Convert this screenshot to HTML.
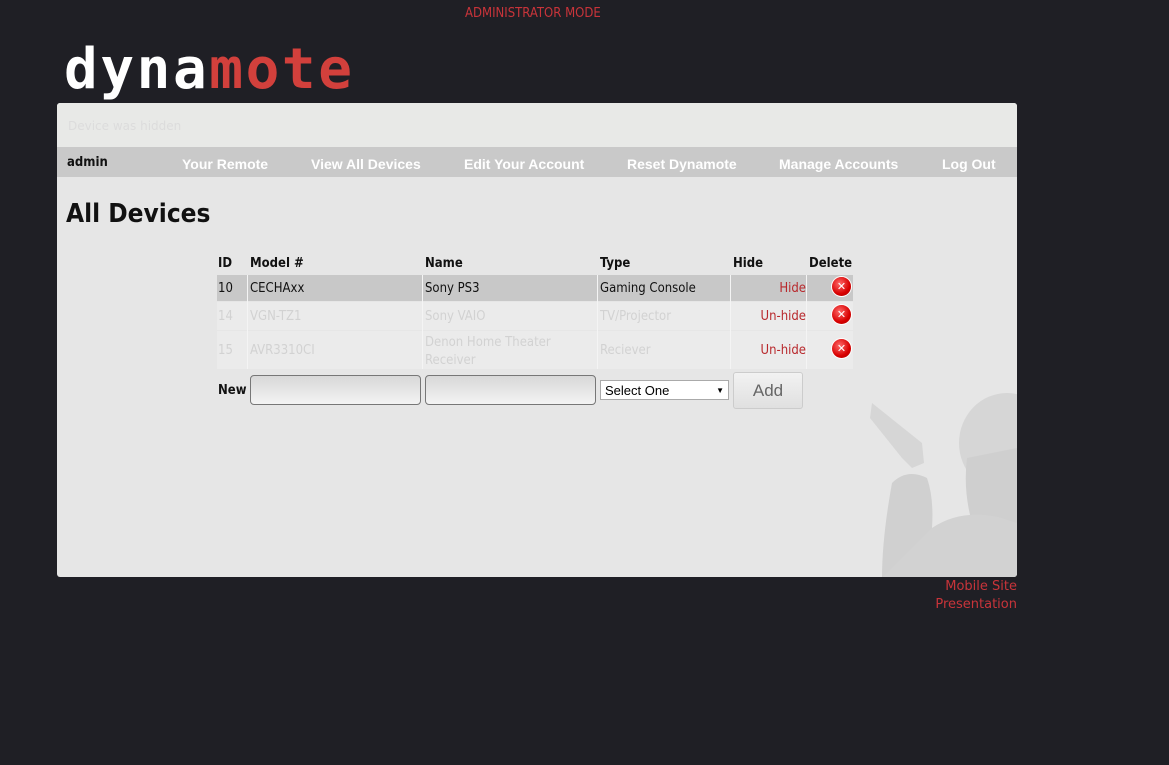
<!DOCTYPE html>
<html><head><style>
body{margin:0;width:1169px;height:765px;background:#1f1f25;font-family:"DejaVu Sans","Liberation Sans",sans-serif;position:relative;overflow:hidden}
.a{position:absolute}
.nav{font-family:"Liberation Sans",Arial,sans-serif;font-weight:bold;color:#fff;font-size:14px;top:156px}
.c{position:absolute;font-size:13px;box-sizing:border-box;padding-left:2px;white-space:nowrap;font-family:"DejaVu Sans Condensed","DejaVu Sans",sans-serif}
.h{font-weight:bold;color:#111;top:256px}
.x{position:absolute;width:19px;height:19px;border-radius:50%;background:radial-gradient(circle at 40% 35%,#ff6a6a,#d80000 60%,#a00);box-shadow:0 0 0 1px #fff;}
.x:after{content:"✕";position:absolute;left:0;top:0;width:19px;line-height:19px;text-align:center;color:#fff;font-size:11px;font-weight:bold}
.f{color:#d2d2d2}
.inp{position:absolute;top:375px;height:30px;width:171px;border:1px solid #777;border-radius:4px;background:linear-gradient(#d8d8d8,#f3f3f3);box-sizing:border-box}
</style></head><body>
<div class="a" style="left:465px;top:6px;color:#c8343a;font-size:13px;font-family:'DejaVu Sans Condensed','DejaVu Sans',sans-serif">ADMINISTRATOR MODE</div>
<div class="a" style="left:64px;top:35px;font-family:'DejaVu Sans Mono',monospace;font-weight:bold;font-size:56px;letter-spacing:2.6px;line-height:70px;color:#fff">dyna<span style="color:#d2403c">mote</span></div>
<div class="a" style="left:57px;top:103px;width:960px;height:474px;background:#e6e6e6;border-radius:3px;overflow:hidden">
 <div class="a" style="left:0;top:0;width:960px;height:44px;background:#e8e9e7"></div>
 <div class="a" style="left:11px;top:16px;font-size:12px;color:#dcdcdc">Device was hidden</div>
 <div class="a" style="left:0;top:44px;width:960px;height:30px;background:#c9c9c9"></div>
 <svg class="a" style="left:805px;top:285px" width="155" height="190" viewBox="0 0 155 190">
  <g fill="#d6d6d6">
   <ellipse cx="145" cy="55" rx="48" ry="50"/>
   <path d="M105 70 Q100 110 115 150 L155 170 L155 60Z" fill="#cfcfcf"/>
   <path d="M10 15 L60 55 L62 75 L50 80 L40 70 L8 30Z"/>
   <path d="M30 95 Q45 80 65 90 Q72 110 70 140 Q60 175 20 190 Q20 150 30 95Z" fill="#d0d0d0"/>
   <path d="M70 140 Q100 120 140 130 L155 135 L155 190 L20 190Z" fill="#d2d2d2"/>
  </g>
 </svg>
</div>
<div class="a" style="left:67px;top:155px;font-size:13px;font-weight:bold;color:#111;font-family:'DejaVu Sans Condensed','DejaVu Sans',sans-serif">admin</div>
<div class="a nav" style="left:182px">Your Remote</div>
<div class="a nav" style="left:311px">View All Devices</div>
<div class="a nav" style="left:464px">Edit Your Account</div>
<div class="a nav" style="left:627px">Reset Dynamote</div>
<div class="a nav" style="left:779px">Manage Accounts</div>
<div class="a nav" style="left:942px">Log Out</div>
<div class="a" style="left:66px;top:199px;font-size:26px;font-weight:bold;color:#111;font-family:'DejaVu Sans Condensed','DejaVu Sans',sans-serif">All Devices</div>

<div class="c h" style="left:216px">ID</div>
<div class="c h" style="left:248px">Model #</div>
<div class="c h" style="left:423px">Name</div>
<div class="c h" style="left:598px">Type</div>
<div class="c h" style="left:731px">Hide</div>
<div class="c h" style="left:807px">Delete</div>

<div class="a" style="left:217px;top:275px;width:636px;height:26px;background:#c8c8c8"></div>
<div class="a" style="left:217px;top:302px;width:636px;height:28px;background:#ebebeb"></div>
<div class="a" style="left:217px;top:331px;width:636px;height:38px;background:#ebebeb"></div>
<div class="a" style="left:247px;top:275px;width:1px;height:94px;background:#f4f4f4"></div>
<div class="a" style="left:422px;top:275px;width:1px;height:94px;background:#f4f4f4"></div>
<div class="a" style="left:597px;top:275px;width:1px;height:94px;background:#f4f4f4"></div>
<div class="a" style="left:730px;top:275px;width:1px;height:94px;background:#f4f4f4"></div>
<div class="a" style="left:806px;top:275px;width:1px;height:94px;background:#f4f4f4"></div>

<div class="c" style="left:216px;top:281px;color:#111">10</div>
<div class="c" style="left:248px;top:281px;color:#111">CECHAxx</div>
<div class="c" style="left:423px;top:281px;color:#111">Sony PS3</div>
<div class="c" style="left:598px;top:281px;color:#111">Gaming Console</div>
<div class="c" style="left:731px;top:281px;width:75px;text-align:right;color:#b8282c">Hide</div>
<div class="x" style="left:832px;top:277px"></div>

<div class="c f" style="left:216px;top:309px">14</div>
<div class="c f" style="left:248px;top:309px">VGN-TZ1</div>
<div class="c f" style="left:423px;top:309px">Sony VAIO</div>
<div class="c f" style="left:598px;top:309px">TV/Projector</div>
<div class="c" style="left:731px;top:309px;width:75px;text-align:right;color:#b8282c">Un-hide</div>
<div class="x" style="left:832px;top:305px"></div>

<div class="c f" style="left:216px;top:343px">15</div>
<div class="c f" style="left:248px;top:343px">AVR3310CI</div>
<div class="c f" style="left:423px;top:334px;line-height:18px">Denon Home Theater<br>Receiver</div>
<div class="c f" style="left:598px;top:343px">Reciever</div>
<div class="c" style="left:731px;top:343px;width:75px;text-align:right;color:#b8282c">Un-hide</div>
<div class="x" style="left:832px;top:339px"></div>

<div class="c" style="left:216px;top:383px;font-weight:bold;color:#111">New</div>
<div class="inp" style="left:250px"></div>
<div class="inp" style="left:425px"></div>
<div class="a" style="left:600px;top:380px;height:20px;background:#fff;border:1px solid #aaa;font-family:'Liberation Sans',sans-serif;font-size:13px;line-height:19px;padding-left:4px;box-sizing:border-box;width:129px">Select One<span style="position:absolute;right:4px;font-size:8px">▼</span></div>
<div class="a" style="left:733px;top:372px;width:70px;height:37px;border:1px solid #ccc;border-radius:3px;background:linear-gradient(#f2f2f2,#e0e0e0);box-sizing:border-box;text-align:center;line-height:35px;font-family:'Liberation Sans',sans-serif;font-size:17px;color:#666">Add</div>

<div class="a" style="right:152px;top:578px;text-align:right;color:#c8343a;font-size:13px;line-height:18px;font-family:'DejaVu Sans',sans-serif">Mobile Site<br>Presentation</div>
</body></html>
